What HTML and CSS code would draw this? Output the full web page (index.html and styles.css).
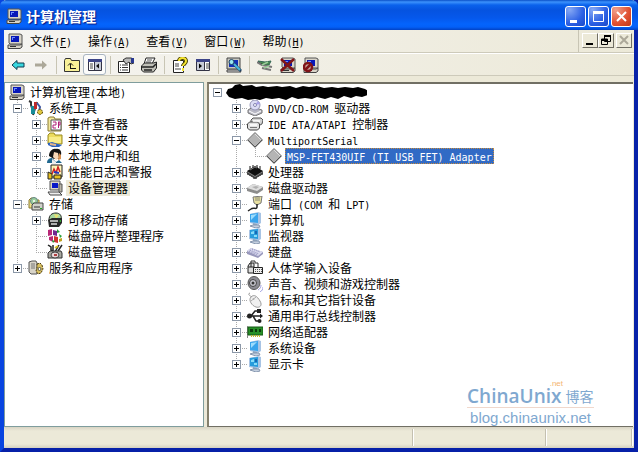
FILE: index.html
```html
<!DOCTYPE html>
<html lang="zh-CN">
<head>
<meta charset="utf-8">
<title>计算机管理</title>
<link rel="stylesheet" href="styles.css">
</head>
<body>
<svg class="sprite" aria-hidden="true">
  <symbol id="pc" viewBox="0 0 16 16"><path d="M2 1h11l2 1v9H3l-1-1z" fill="#d8d4c8" stroke="#555"/><path d="M4 3h8v6H4z" fill="#0818b8"/><path d="M5 4h3v1H6v2H5z" fill="#6c8cff"/><path d="M1 12h12l2-1v3l-2 1.500H1z" fill="#d8d4c8" stroke="#444"/><path d="M3 13.500h6" stroke="#333"/></symbol>
  <symbol id="tools" viewBox="0 0 16 16"><path d="M1 1l2 1v3l3 9M9 2L5 15" fill="none" stroke="#333" stroke-width="2"/><path d="M3 6h4v8H3z" fill="#188c98"/><path d="M6 2h3v7H6z" fill="#c02828"/><path d="M9 3l3 4-1 5" fill="none" stroke="#4058a0" stroke-width="2"/><circle cx="12" cy="12" r="2.500" fill="#e0c840" stroke="#554400" stroke-dasharray="2 1"/></symbol>
  <symbol id="event" viewBox="0 0 16 16"><path d="M1 2l2-1h4l1 2h6v12H1z" fill="#f4e89c" stroke="#8a7a30"/><path d="M4 4h10v10H4z" fill="#fff" stroke="#555"/><path d="M6 6h3v3H6v3h3M11.500 6v6M11 6h2v3h-2" fill="none" stroke="#b02078"/></symbol>
  <symbol id="share" viewBox="0 0 16 16"><path d="M1 3l2-2h4l1 2h7v9H1z" fill="#ecdc60" stroke="#9a8a20"/><path d="M2 5h12v6H2z" fill="#f8ec88"/><path d="M1 11l4-1 6 2 4 1-3 2H5l-4-2z" fill="#2b62c0"/><path d="M3 12l6 1" stroke="#e8b888" stroke-width="2"/></symbol>
  <symbol id="users" viewBox="0 0 16 16"><path d="M2 8c0-5 4-8 7-7 4-1 6 3 5 6l-2 4H7z" fill="#141414"/><path d="M7 4l4 1 1 5-3 2-3-3z" fill="#f8d8b8"/><path d="M12 5l2 2v4l-3 1z" fill="#d89050"/><path d="M0 15c0-4 3-5 5-5l4 4 3-2 3 3z" fill="#206890"/><path d="M5 11l4 3v2H5z" fill="#eee"/></symbol>
  <symbol id="perf" viewBox="0 0 16 16"><path d="M4 1h11v12H4z" fill="#fff6b8" stroke="#222"/><path d="M5 10l2-5 2 4 2-6 2 5" fill="none" stroke="#d02020" stroke-width="1.500"/><path d="M1 8l4 2v5H1zM7 11h7v4H7z" fill="#e8c020" stroke="#222"/><path d="M7 8l5 1" stroke="#2038c0" stroke-width="2"/></symbol>
  <symbol id="dev" viewBox="0 0 16 16"><path d="M3 1h10v9H3z" fill="#d8d4c8" stroke="#555"/><path d="M5 3h6v5H5z" fill="#0818c8"/><path d="M12 4h3v8h-3z" fill="#b8b4a8" stroke="#555"/><path d="M1 12h11l3 3H3z" fill="#eee" stroke="#444"/></symbol>
  <symbol id="store" viewBox="0 0 16 16"><path d="M1 4l2-2h4l1 2h3v8H1z" fill="#f0e088" stroke="#8a7a30"/><circle cx="6" cy="5" r="3.500" fill="#9ccf9c" stroke="#688"/><circle cx="6" cy="5" r="1" fill="#fff"/><path d="M4 9l2-2h9v7H4z" fill="#d0d0c8" stroke="#444"/><path d="M6 11h6" stroke="#333"/><path d="M12 12h2v1h-2z" fill="#2a2"/></symbol>
  <symbol id="remov" viewBox="0 0 16 16"><path d="M2 8C2 3 5 1 9 1s6 3 5 6z" fill="#a8d8a0" stroke="#222"/><path d="M7 2l5 1-3 4z" fill="#e8e070"/><path d="M1 8l4-2h10v5l-3 4H2z" fill="#282828"/><path d="M3 9h8M4 12h6" stroke="#ddd" stroke-width="1.500"/><path d="M12 9l2-1v2z" fill="#3c3"/></symbol>
  <symbol id="defrag" viewBox="0 0 16 16"><path d="M1 2l4-1v6L1 8zM2 9l4-1v6l-4-2z" fill="#b82878"/><path d="M6 2l4 1v5L6 7z" fill="#702890"/><path d="M10 1l3 3-3 1z" fill="#28a038"/><path d="M7 8l4 1v6l-4-1z" fill="#d03030"/><path d="M12 6l3 2-2 2zM5 12l3 1-2 2z" fill="#28a038"/><path d="M12 11l3-1v3l-3 1z" fill="#c0a020"/></symbol>
  <symbol id="diskm" viewBox="0 0 16 16"><path d="M1 1l3 2v3l3 2M6 1v6M12 1l-4 7M15 1l-4 6" fill="none" stroke="#222" stroke-width="1.500"/><path d="M8 4l3-2" stroke="#d8c020" stroke-width="2"/><path d="M1 9l2-2h11l1 2v5H1z" fill="#a8a8a0" stroke="#333"/><ellipse cx="8" cy="11" rx="4" ry="3" fill="#e8d8d8" stroke="#444"/><path d="M7 10h3v2H7z" fill="#b04040"/></symbol>
  <symbol id="serv" viewBox="0 0 16 16"><path d="M1 2l3-1h4l1 2v11H3l-2-2z" fill="#d8d4c8" stroke="#555"/><path d="M3 4h4M3 6h4M3 8h4" stroke="#777"/><path d="M9 4l3-1 2 2 1 4-2 4-3 1-2-3 1-3z" fill="#d8c060" stroke="#4a3a10" stroke-dasharray="2 1"/><circle cx="11.500" cy="9" r="1.500" fill="#fff" stroke="#554"/></symbol>
  <symbol id="cd" viewBox="0 0 16 16"><path d="M1 10l5-3 9 3v3l-7 3-7-3z" fill="#b8b8c4" stroke="#777"/><circle cx="8" cy="5" r="5" fill="#dcdcf4" stroke="#9494b4"/><path d="M8 5l3-4 2 3z" fill="#a8a0e8"/><circle cx="8" cy="5" r="1.500" fill="#fff" stroke="#8484b0"/><path d="M2 11l6 3 6-3" fill="none" stroke="#fff"/></symbol>
  <symbol id="ide" viewBox="0 0 16 16"><path d="M4 4l2-2h8l2 2-1 4-2 1H4z" fill="#d4d4d4" stroke="#555"/><path d="M0.500 8l2-2h8l2 2v4l-2 2h-8l-2-2z" fill="#e0e0e0" stroke="#444"/><path d="M3 9h7M6 5h7" stroke="#fff" stroke-width="1.500"/><path d="M3 11.500h7" stroke="#777"/></symbol>
  <symbol id="dia" viewBox="0 0 16 16"><path d="M8 .5L15.500 8 8 15.500.5 8z" fill="#b4b4b4" stroke="#777"/><path d="M8 2l6 6" stroke="#ddd"/><path d="M1 8l7 7 7-7" fill="none" stroke="#555"/></symbol>
  <symbol id="chip" viewBox="0 0 16 16"><path d="M1 7v4M3 8v4M5 9v4M7 11v4M9 11v4M11 9v4M13 8v4M15 7v4M3 2v3M6 1v3M10 1v3M13 2v3" stroke="#111"/><path d="M0 7l8-5 8 5-8 5z" fill="#101010"/><path d="M0 8l8 5 8-5v2l-8 5-8-5z" fill="#222" opacity=".7"/><path d="M3 6l5-3 2 1" fill="none" stroke="#777"/></symbol>
  <symbol id="hdd" viewBox="0 0 16 16"><path d="M0 8l6-4 10 3v3l-6 4-10-3z" fill="#8c8c8c"/><path d="M0 8l6-4 10 3-6 4z" fill="#dedede"/><path d="M5 7l4-1 3 1-3 2z" fill="#b0b0b0"/></symbol>
  <symbol id="port" viewBox="0 0 16 16"><path d="M6 1l9-1-1 7-4 2-3-2z" fill="#e8e0a0" stroke="#777"/><path d="M8 2h5M8 4h5" stroke="#887"/><path d="M10 8v3c0 3-4 0-6 2l-3 2" fill="none" stroke="#222" stroke-width="1.500"/></symbol>
  <symbol id="mon" viewBox="0 0 16 16"><path d="M3 2l8-2 3 1v10l-3 2-8-2z" fill="#a8c4e4"/><path d="M3 2l8-1v10l-8-1z" fill="#38a4ec"/><path d="M4 3l6-1-6 6z" fill="#9cdcfc"/><path d="M6 11l4 1v2H6z" fill="#90a8c0"/><path d="M3 14l3-1h6l1 2-4 1z" fill="#c4d0e0" stroke="#8898b0"/></symbol>
  <symbol id="screen" viewBox="0 0 16 16"><path d="M2 2l9-2 3 1v10l-3 2-9-2z" fill="#a8c4e4"/><path d="M3 2l8-1v10l-8-1z" fill="#289cdc"/><path d="M4 4l3-1v3H4zM7 7h3v2H7z" fill="#88dcf8"/><path d="M8 3h2v3H8z" fill="#1868b4"/><path d="M6 11l4 1v2H6z" fill="#90a8c0"/><path d="M3 14l3-1h6l1 2-4 1z" fill="#c4d0e0" stroke="#8898b0"/></symbol>
  <symbol id="kbd" viewBox="0 0 16 16"><path d="M0 7l4-3 12 4v2l-5 4-11-4z" fill="#9898bc"/><path d="M0 7l4-3 12 4-5 4z" fill="#dcdcf0"/><path d="M3 6l9 4M5 5l8 3M2 7l9 4" stroke="#8484b4" stroke-dasharray="1 1"/></symbol>
  <symbol id="hid" viewBox="0 0 16 16"><path d="M1 13V6l2-3h4v10z" fill="#ddd" stroke="#222"/><path d="M4 3v4M1 7h6" stroke="#222"/><path d="M6.500 7.500h9v6h-9z" fill="#eee" stroke="#222"/><path d="M8 9.500h7M8 11.500h7" stroke="#555" stroke-dasharray="1 1"/><path d="M4 3V1h4v2h3v4" fill="none" stroke="#333"/></symbol>
  <symbol id="snd" viewBox="0 0 16 16"><ellipse cx="7" cy="7" rx="6" ry="6.500" fill="#8c8c94" stroke="#555"/><circle cx="6" cy="7" r="3.500" fill="#c8c8d0" stroke="#444"/><circle cx="6" cy="7" r="1.500" fill="#333"/><path d="M11 14c2-1 3-3 3-5M13 16c2-1 3-3 3-5" fill="none" stroke="#a0a0e0"/></symbol>
  <symbol id="mouse" viewBox="0 0 16 16"><path d="M3 1c-3 1 0 3 2 4" fill="none" stroke="#999"/><path d="M4 5c3-3 6-1 9 4 3 5-1 7-4 6C5 14 1 8 4 5z" fill="#f0f0f0" stroke="#999"/><path d="M4 9l5-4M6 6l1 2" fill="none" stroke="#aaa"/></symbol>
  <symbol id="usb" viewBox="0 0 16 16"><path d="M2 8h12M4 8l4-5h3M6 8l3 5h3" fill="none" stroke="#222" stroke-width="1.500"/><circle cx="2.500" cy="8" r="2.500" fill="#222"/><path d="M13 5.500l3 2.500-3 2.500zM10 1h4v4h-4z" fill="#222"/><circle cx="12.500" cy="13" r="2" fill="#222"/></symbol>
  <symbol id="net" viewBox="0 0 16 16"><path d="M0.500 2v12" stroke="#888"/><path d="M1 3h15v8H1z" fill="#289028" stroke="#145814"/><path d="M3 5h3v3H3zM8 5h2v3H8zM12 5h2v3h-2z" fill="#0c3c0c"/><path d="M4 12h9" stroke="#c8b830" stroke-width="2" stroke-dasharray="1 1"/></symbol>
  <symbol id="left" viewBox="0 0 16 16"><path d="M2 8l5-4.500V6h7v4H7v2.500z"/></symbol>
  <symbol id="right" viewBox="0 0 16 16"><path d="M14 8L9 3.500V6.500H2v3h7v3z"/></symbol>
  <symbol id="up" viewBox="0 0 16 16"><path d="M.5 3.500l1-2h5l1 2h8v11H.5z" fill="#f8f098" stroke="#333"/><path d="M6.500 12V7M4 8.500L6.500 6 9 8.500M6 11.500h6" fill="none" stroke="#111"/></symbol>
  <symbol id="pane" viewBox="0 0 16 16"><path d="M1.500 2.500h13v11h-13z" fill="#fff" stroke="#334"/><path d="M1 2h14v3H1z" fill="#3c4488"/><path d="M3 7h3M3 9h3M3 11h3" stroke="#444"/><path d="M8 5h6v8H8z" fill="#c8ccd8"/><path d="M7.500 5v8" stroke="#334"/><path d="M12 6.500v5L9 9z" fill="#111"/></symbol>
  <symbol id="prop" viewBox="0 0 16 16"><path d="M.5 4.500h11v11H.5z" fill="#fff" stroke="#222"/><path d="M2 8h1M4 8h6M2 10.500h1M4 10.500h6M2 13h1M4 13h6" stroke="#333"/><path d="M5 3l3-2h5l3 1v4l-3 1-2-2-3 2z" fill="#b8b8b8" stroke="#333"/><path d="M13 1h3v5h-3z" fill="#283890"/></symbol>
  <symbol id="print" viewBox="0 0 16 16"><path d="M5 1h9l-3 6H3z" fill="#fff" stroke="#222"/><path d="M6 3h5M5 5h5" stroke="#555"/><path d="M.5 9l3-3h9l3-1v6l-3 4h-10l-2-2z" fill="#c0c0b8" stroke="#222"/><path d="M1 10h11l3-3M3 13h8" fill="none" stroke="#222" stroke-width="1.500"/></symbol>
  <symbol id="help" viewBox="0 0 16 16"><path d="M1.500 3.500h10v12h-10z" fill="#fff" stroke="#222"/><path d="M3 7h4M3 9h4M3 12h6" stroke="#444"/><path d="M7 4c0-4 7-4 7 0 0 3-3 3-3 5" fill="none" stroke="#443c00" stroke-width="4"/><path d="M7 4c0-4 7-4 7 0 0 3-3 3-3 5M11 11v3" fill="none" stroke="#f4e430" stroke-width="2"/></symbol>
  <symbol id="scan" viewBox="0 0 16 16"><path d="M1 1h13v11H1z" fill="#c8c8c0" stroke="#444"/><path d="M3 3h9v7H3z" fill="#1030b8"/><path d="M1 13h13l1 2H1z" fill="#ddd" stroke="#444"/><circle cx="5.500" cy="5" r="2.500" fill="#98e8f0" stroke="#246"/><path d="M8 7l7 7" stroke="#246" stroke-width="3"/><path d="M8 7l6 6" stroke="#48b8dc" stroke-width="2"/></symbol>
  <symbol id="upd" viewBox="0 0 16 16"><path d="M1 4l7 1 6-1-2 4H5z" fill="#488850" stroke="#365"/><path d="M0 5l5 3 10 2M5 11l9 2" stroke="#777" stroke-width="2"/><path d="M5 8l6-3M7 11l5-2" stroke="#9c9" stroke-width="1.500"/></symbol>
</svg>

<main class="window">
  <header class="titlebar">
    <svg class="icon"><use href="#pc"/></svg>
    <h1>计算机管理</h1>
    <div class="caption">
      <button class="cap" aria-label="最小化"><svg viewBox="0 0 19 19"><path d="M4 13h7v3H4z" fill="#fff"/></svg></button>
      <button class="cap" aria-label="最大化"><svg viewBox="0 0 19 19"><path d="M4.500 5v9.500h10V5z" fill="none" stroke="#fff"/><path d="M4 4h11v3H4z" fill="#fff"/></svg></button>
      <button class="cap cap-close" aria-label="关闭"><svg viewBox="0 0 19 19"><path d="M5 5l9 9M14 5l-9 9" stroke="#fff" stroke-width="2"/></svg></button>
    </div>
  </header>

  <nav class="menubar">
    <svg class="icon"><use href="#pc"/></svg>
    <button class="menu">文件<span class="latin">(<u>F</u>)</span></button>
    <button class="menu">操作<span class="latin">(<u>A</u>)</span></button>
    <button class="menu">查看<span class="latin">(<u>V</u>)</span></button>
    <button class="menu">窗口<span class="latin">(<u>W</u>)</span></button>
    <button class="menu">帮助<span class="latin">(<u>H</u>)</span></button>
    <div class="mdi">
      <button aria-label="最小化子窗口"><svg viewBox="0 0 14 13"><path d="M3 9h7v2H3z"/></svg></button>
      <button aria-label="还原子窗口"><svg viewBox="0 0 14 13"><path d="M5.500 2v5.500h6V2zM2.500 5v5.500h6V5z" fill="#ece9d8" stroke="#000"/><path d="M5 1h7v2H5zM2 5h7v2H2z"/></svg></button>
      <button class="mdi-close" aria-label="关闭子窗口" disabled><svg viewBox="0 0 14 13"><path d="M3 2l8 8M11 2l-8 8" stroke="#aca899" stroke-width="2"/></svg></button>
    </div>
  </nav>

  <div class="toolbar" role="toolbar">
    <button class="tool back" aria-label="后退"><svg class="icon"><use href="#left"/></svg></button>
    <button class="tool forward" aria-label="前进" disabled><svg class="icon"><use href="#right"/></svg></button>
    <span class="sep"></span>
    <button class="tool" aria-label="向上"><svg class="icon"><use href="#up"/></svg></button>
    <button class="tool pressed" aria-label="显示树" aria-pressed="true"><svg class="icon"><use href="#pane"/></svg></button>
    <span class="sep"></span>
    <button class="tool" aria-label="属性"><svg class="icon"><use href="#prop"/></svg></button>
    <button class="tool" aria-label="打印"><svg class="icon"><use href="#print"/></svg></button>
    <span class="sep"></span>
    <button class="tool" aria-label="帮助"><svg class="icon"><use href="#help"/></svg></button>
    <button class="tool" aria-label="操作窗格"><svg class="icon" viewBox="0 0 16 16"><path d="M1.500 2.500h13v11h-13z" fill="#fff" stroke="#334"/><path d="M1 2h14v3H1z" fill="#3c4488"/><path d="M2 5h7v8H2z" fill="#c8ccd8"/><path d="M9.500 5v8" stroke="#334"/><path d="M11 7h3M11 9h3M11 11h3" stroke="#444"/><path d="M4 6.500v5L7 9z"/></svg></button>
    <span class="sep"></span>
    <button class="tool" aria-label="扫描硬件改动"><svg class="icon"><use href="#scan"/></svg></button>
    <span class="sep"></span>
    <button class="tool" aria-label="更新驱动程序"><svg class="icon"><use href="#upd"/></svg></button>
    <button class="tool" aria-label="卸载"><svg class="icon" viewBox="0 0 16 16"><use href="#pc"/><path d="M1 2l13 12M14 2L1 14" stroke="#801418" stroke-width="2.500"/></svg></button>
    <button class="tool" aria-label="停用"><svg class="icon" viewBox="0 0 16 16"><use href="#pc"/><circle cx="5" cy="10" r="4" fill="#c8a8a0" stroke="#801418" stroke-width="2.500"/><path d="M2 13l6-6" stroke="#801418" stroke-width="2.500"/></svg></button>
  </div>

  <div class="panes">
    <section class="pane-left">
      <ul class="tree">
        <li>
          <div class="row"><svg class="icon"><use href="#pc"/></svg><span class="label">计算机管理<span class="latin">(</span>本地<span class="latin">)</span></span></div>
          <ul class="branch flush">
            <li>
              <div class="row"><span class="joint"><button class="box" aria-label="折叠"></button></span><svg class="icon"><use href="#tools"/></svg><span class="label">系统工具</span></div>
              <ul class="branch">
                <li><div class="row"><span class="joint"><button class="box plus" aria-label="展开"></button></span><svg class="icon"><use href="#event"/></svg><span class="label">事件查看器</span></div></li>
                <li><div class="row"><span class="joint"><button class="box plus" aria-label="展开"></button></span><svg class="icon"><use href="#share"/></svg><span class="label">共享文件夹</span></div></li>
                <li><div class="row"><span class="joint"><button class="box plus" aria-label="展开"></button></span><svg class="icon"><use href="#users"/></svg><span class="label">本地用户和组</span></div></li>
                <li><div class="row"><span class="joint"><button class="box plus" aria-label="展开"></button></span><svg class="icon"><use href="#perf"/></svg><span class="label">性能日志和警报</span></div></li>
                <li><div class="row"><span class="joint"></span><svg class="icon"><use href="#dev"/></svg><span class="label current">设备管理器</span></div></li>
              </ul>
            </li>
            <li>
              <div class="row"><span class="joint"><button class="box" aria-label="折叠"></button></span><svg class="icon"><use href="#store"/></svg><span class="label">存储</span></div>
              <ul class="branch">
                <li><div class="row"><span class="joint"><button class="box plus" aria-label="展开"></button></span><svg class="icon"><use href="#remov"/></svg><span class="label">可移动存储</span></div></li>
                <li><div class="row"><span class="joint"></span><svg class="icon"><use href="#defrag"/></svg><span class="label">磁盘碎片整理程序</span></div></li>
                <li><div class="row"><span class="joint"></span><svg class="icon"><use href="#diskm"/></svg><span class="label">磁盘管理</span></div></li>
              </ul>
            </li>
            <li><div class="row"><span class="joint"><button class="box plus" aria-label="展开"></button></span><svg class="icon"><use href="#serv"/></svg><span class="label">服务和应用程序</span></div></li>
          </ul>
        </li>
      </ul>
    </section>

    <section class="pane-right">
      <ul class="tree">
        <li>
          <div class="row"><span class="joint"><button class="box" aria-label="折叠"></button></span><svg class="redacted" viewBox="0 0 142 16"><path d="M1 9l2-4 4-1 3-3 5-1 3 2 9-1 4 2 7-1 5 1 9-1 5 1 8-1 6 2 7-2 6 1 8-1 7 2 8-1 6 1 7-1 8 1 5-1 7 2 5 3-2 3-6 2-6-1-5 2-7-2-6 3-7-2-6 2-8-2-5 2-7-1-7 1-6-2-6 3-7-2-7 1-6-1-6 2-5-1-7 1-6-2-7 1-6-2z"/></svg></div>
          <ul class="branch">
            <li><div class="row"><span class="joint"><button class="box plus" aria-label="展开"></button></span><svg class="icon"><use href="#cd"/></svg><span class="label"><span class="latin">DVD/CD-ROM </span>驱动器</span></div></li>
            <li><div class="row"><span class="joint"><button class="box plus" aria-label="展开"></button></span><svg class="icon"><use href="#ide"/></svg><span class="label"><span class="latin">IDE ATA/ATAPI </span>控制器</span></div></li>
            <li>
              <div class="row"><span class="joint"><button class="box" aria-label="折叠"></button></span><svg class="icon"><use href="#dia"/></svg><span class="label"><span class="latin">MultiportSerial</span></span></div>
              <ul class="branch">
                <li><div class="row"><span class="joint"></span><svg class="icon"><use href="#dia"/></svg><span class="label selected"><span class="latin">MSP-FET430UIF (TI USB FET) Adapter</span></span></div></li>
              </ul>
            </li>
            <li><div class="row"><span class="joint"><button class="box plus" aria-label="展开"></button></span><svg class="icon"><use href="#chip"/></svg><span class="label">处理器</span></div></li>
            <li><div class="row"><span class="joint"><button class="box plus" aria-label="展开"></button></span><svg class="icon"><use href="#hdd"/></svg><span class="label">磁盘驱动器</span></div></li>
            <li><div class="row"><span class="joint"><button class="box plus" aria-label="展开"></button></span><svg class="icon"><use href="#port"/></svg><span class="label">端口<span class="latin"> (COM </span>和<span class="latin"> LPT)</span></span></div></li>
            <li><div class="row"><span class="joint"><button class="box plus" aria-label="展开"></button></span><svg class="icon"><use href="#mon"/></svg><span class="label">计算机</span></div></li>
            <li><div class="row"><span class="joint"><button class="box plus" aria-label="展开"></button></span><svg class="icon"><use href="#screen"/></svg><span class="label">监视器</span></div></li>
            <li><div class="row"><span class="joint"><button class="box plus" aria-label="展开"></button></span><svg class="icon"><use href="#kbd"/></svg><span class="label">键盘</span></div></li>
            <li><div class="row"><span class="joint"><button class="box plus" aria-label="展开"></button></span><svg class="icon"><use href="#hid"/></svg><span class="label">人体学输入设备</span></div></li>
            <li><div class="row"><span class="joint"><button class="box plus" aria-label="展开"></button></span><svg class="icon"><use href="#snd"/></svg><span class="label">声音、视频和游戏控制器</span></div></li>
            <li><div class="row"><span class="joint"><button class="box plus" aria-label="展开"></button></span><svg class="icon"><use href="#mouse"/></svg><span class="label">鼠标和其它指针设备</span></div></li>
            <li><div class="row"><span class="joint"><button class="box plus" aria-label="展开"></button></span><svg class="icon"><use href="#usb"/></svg><span class="label">通用串行总线控制器</span></div></li>
            <li><div class="row"><span class="joint"><button class="box plus" aria-label="展开"></button></span><svg class="icon"><use href="#net"/></svg><span class="label">网络适配器</span></div></li>
            <li><div class="row"><span class="joint"><button class="box plus" aria-label="展开"></button></span><svg class="icon"><use href="#mon"/></svg><span class="label">系统设备</span></div></li>
            <li><div class="row"><span class="joint"><button class="box plus" aria-label="展开"></button></span><svg class="icon"><use href="#screen"/></svg><span class="label">显示卡</span></div></li>
          </ul>
        </li>
      </ul>
      <div class="watermark">
        <div class="brand-tld">.net</div>
        <div class="brand"><span class="brand-name">ChinaUnix</span><span class="brand-blog">博客</span></div>
        <div class="brand-url">blog.chinaunix.net</div>
      </div>
    </section>
  </div>

  <footer class="status"><span class="status-main"></span><span class="status-mid"></span><span class="status-end"></span></footer>
</main>
</body>
</html>
```
FILE: styles.css
```css
* { box-sizing: border-box; }

body {
  margin: 0;
  background: #0a2a9c;
  color: #000;
  font: 12px/16px "Noto Sans CJK SC", sans-serif;
}

ul { margin: 0; padding: 0; list-style: none; }

button {
  margin: 0;
  padding: 0;
  border: 0;
  background: none;
  color: inherit;
  font: inherit;
}

.sprite { display: none; }
.icon { display: block; flex: none; width: 16px; height: 16px; }
.latin { font: 10px/12px "DejaVu Sans Mono", monospace; white-space: pre; }

.window {
  display: flex;
  flex-direction: column;
  min-height: 100vh;
  border: solid;
  border-width: 0 4px 4px;
  border-color: #0a35d8 #0822a8 #0620a8 #0844e0;
  background: #ece9d8;
}

/* Title bar */
.titlebar {
  display: flex;
  align-items: center;
  height: 30px;
  margin: 0 -4px;
  padding: 2px 6px 0;
  border-radius: 6px 6px 0 0;
  background: linear-gradient(#0a50c8 0, #3c92fc 2px, #0a62ec 5px, #0553e0 10px, #0558ec 18px, #0464fc 24px, #0360f8 27px, #0242c4 30px);
}
.titlebar h1 {
  flex: 1;
  margin: 0 0 0 4px;
  color: #fff;
  font-size: 14px;
  line-height: 20px;
  font-weight: 700;
  text-shadow: 1px 1px 1px #0a1883;
}
.caption { display: flex; gap: 2px; }
.cap {
  width: 21px;
  height: 21px;
  border: 1px solid #fff;
  border-radius: 3px;
  background: radial-gradient(circle at 20% 15%, #86a8f4, #2c60e4 60%, #1848c8);
}
.cap-close { background: radial-gradient(circle at 20% 15%, #f0a08c, #e05030 60%, #c03818); }
.cap svg { display: block; width: 19px; height: 19px; }

/* Menu bar */
.menubar, .toolbar { background: linear-gradient(90deg, #f5f4f1, #ece9d8); }
.menubar {
  display: flex;
  align-items: center;
  height: 23px;
  padding-left: 3px;
  border-bottom: 1px solid #cdcaba;
}
.menu { padding: 0 8px; }
.menubar .icon { margin-right: -1px; }
.mdi {
  display: flex;
  align-items: flex-start;
  align-self: stretch;
  margin-left: auto;
  padding: 3px 2px 0 3px;
  border-left: 1px solid #c8c5b4;
}
.mdi button {
  width: 16px;
  height: 15px;
  border: 1px solid;
  border-color: #fff #716f64 #716f64 #fff;
  background: #ece9d8;
}
.mdi .mdi-close { margin-left: 2px; }
.mdi svg { display: block; width: 14px; height: 13px; }

/* Toolbar */
.toolbar {
  display: flex;
  align-items: center;
  height: 23px;
  padding-left: 2px;
  border-top: 1px solid #fff;
  border-bottom: 1px solid #cdcaba;
}
.tool {
  display: flex;
  align-items: center;
  justify-content: center;
  width: 23px;
  height: 21px;
}
.pressed { border: 1px solid #a8b4c0; border-radius: 3px; background: #fbfbfa; }
.back { fill: #38d8e0; stroke: #103c50; }
.forward { fill: #aca899; }
.sep { width: 1px; height: 18px; margin: 0 3px 0 4px; background: #c8c5b4; }

/* Panes */
.panes { display: flex; flex: 1; gap: 3px; padding-top: 6px; }
.pane-left {
  flex: 0 0 200px;
  padding: 1px 0 0 4px;
  border: 1px solid #7f9d9d;
  background: #fff;
}
.pane-right {
  position: relative;
  flex: 1;
  margin-right: 1px;
  border: solid #716f64;
  border-width: 2px 0 1px 2px;
  border-left-color: #85806c;
  background: #fff;
}

/* Tree */
.row { display: flex; align-items: center; height: 16px; }
.label { margin-left: 3px; padding: 0 2px; white-space: nowrap; }
.current { background: #ece9d8; }
.selected { padding: 0 2px; outline: 1px dotted #c88c3c; outline-offset: -1px; background: #316ac5; color: #fff; }
.branch { padding-left: 19px; }
.flush { padding-left: 0; }
.branch > li {
  background: repeating-linear-gradient(#aaa 0 1px, transparent 1px 2px) 8px 0 / 1px 100% no-repeat;
}
.branch > li:last-child { background-size: 1px 8px; }
.joint {
  display: flex;
  align-items: center;
  flex: none;
  width: 19px;
  height: 16px;
  padding-left: 4px;
}
.branch .joint { background: repeating-linear-gradient(90deg, #aaa 0 1px, transparent 1px 2px) 8px 8px / 11px 1px no-repeat; }
.box {
  width: 9px;
  height: 9px;
  border: 1px solid #8c98a8;
  background: linear-gradient(#000, #000) center / 5px 1px no-repeat, #fff;
}
.plus { background: linear-gradient(#000, #000) center / 5px 1px no-repeat, linear-gradient(#000, #000) center / 1px 5px no-repeat, #fff; }
.redacted { display: block; width: 142px; height: 16px; margin-left: -3px; }

/* Watermark */
.watermark { position: absolute; right: 42px; bottom: -2px; color: #7fa8d0; }
.brand {
  display: flex;
  align-items: center;
  gap: 4px;
  height: 22px;
  margin: 0 -3px;
  padding-bottom: 2px;
  border-bottom: 1px solid #f0d8cc;
}
.brand-name { font: 600 19px/20px "Open Sans", sans-serif; }
.brand-tld { padding-right: 28px; color: #f4b470; font: 8px/4px "Liberation Sans", sans-serif; text-align: right; }
.brand-blog { font-size: 14px; line-height: 20px; }
.brand-url { font: 15px/20px "Liberation Sans", sans-serif; }

/* Status bar */
.status {
  display: flex;
  height: 21px;
  padding: 2px 2px 2px 0;
  background: linear-gradient(#d8d4c4, #ece9d8 4px, #ece9d8 17px, #d4d0c0);
}
.status span { border-right: 1px solid #c4c0b0; box-shadow: 1px 0 #fff; }
.status-main { flex: 409; }
.status-mid { flex: 133; }
.status-end { flex: 85; }
```
